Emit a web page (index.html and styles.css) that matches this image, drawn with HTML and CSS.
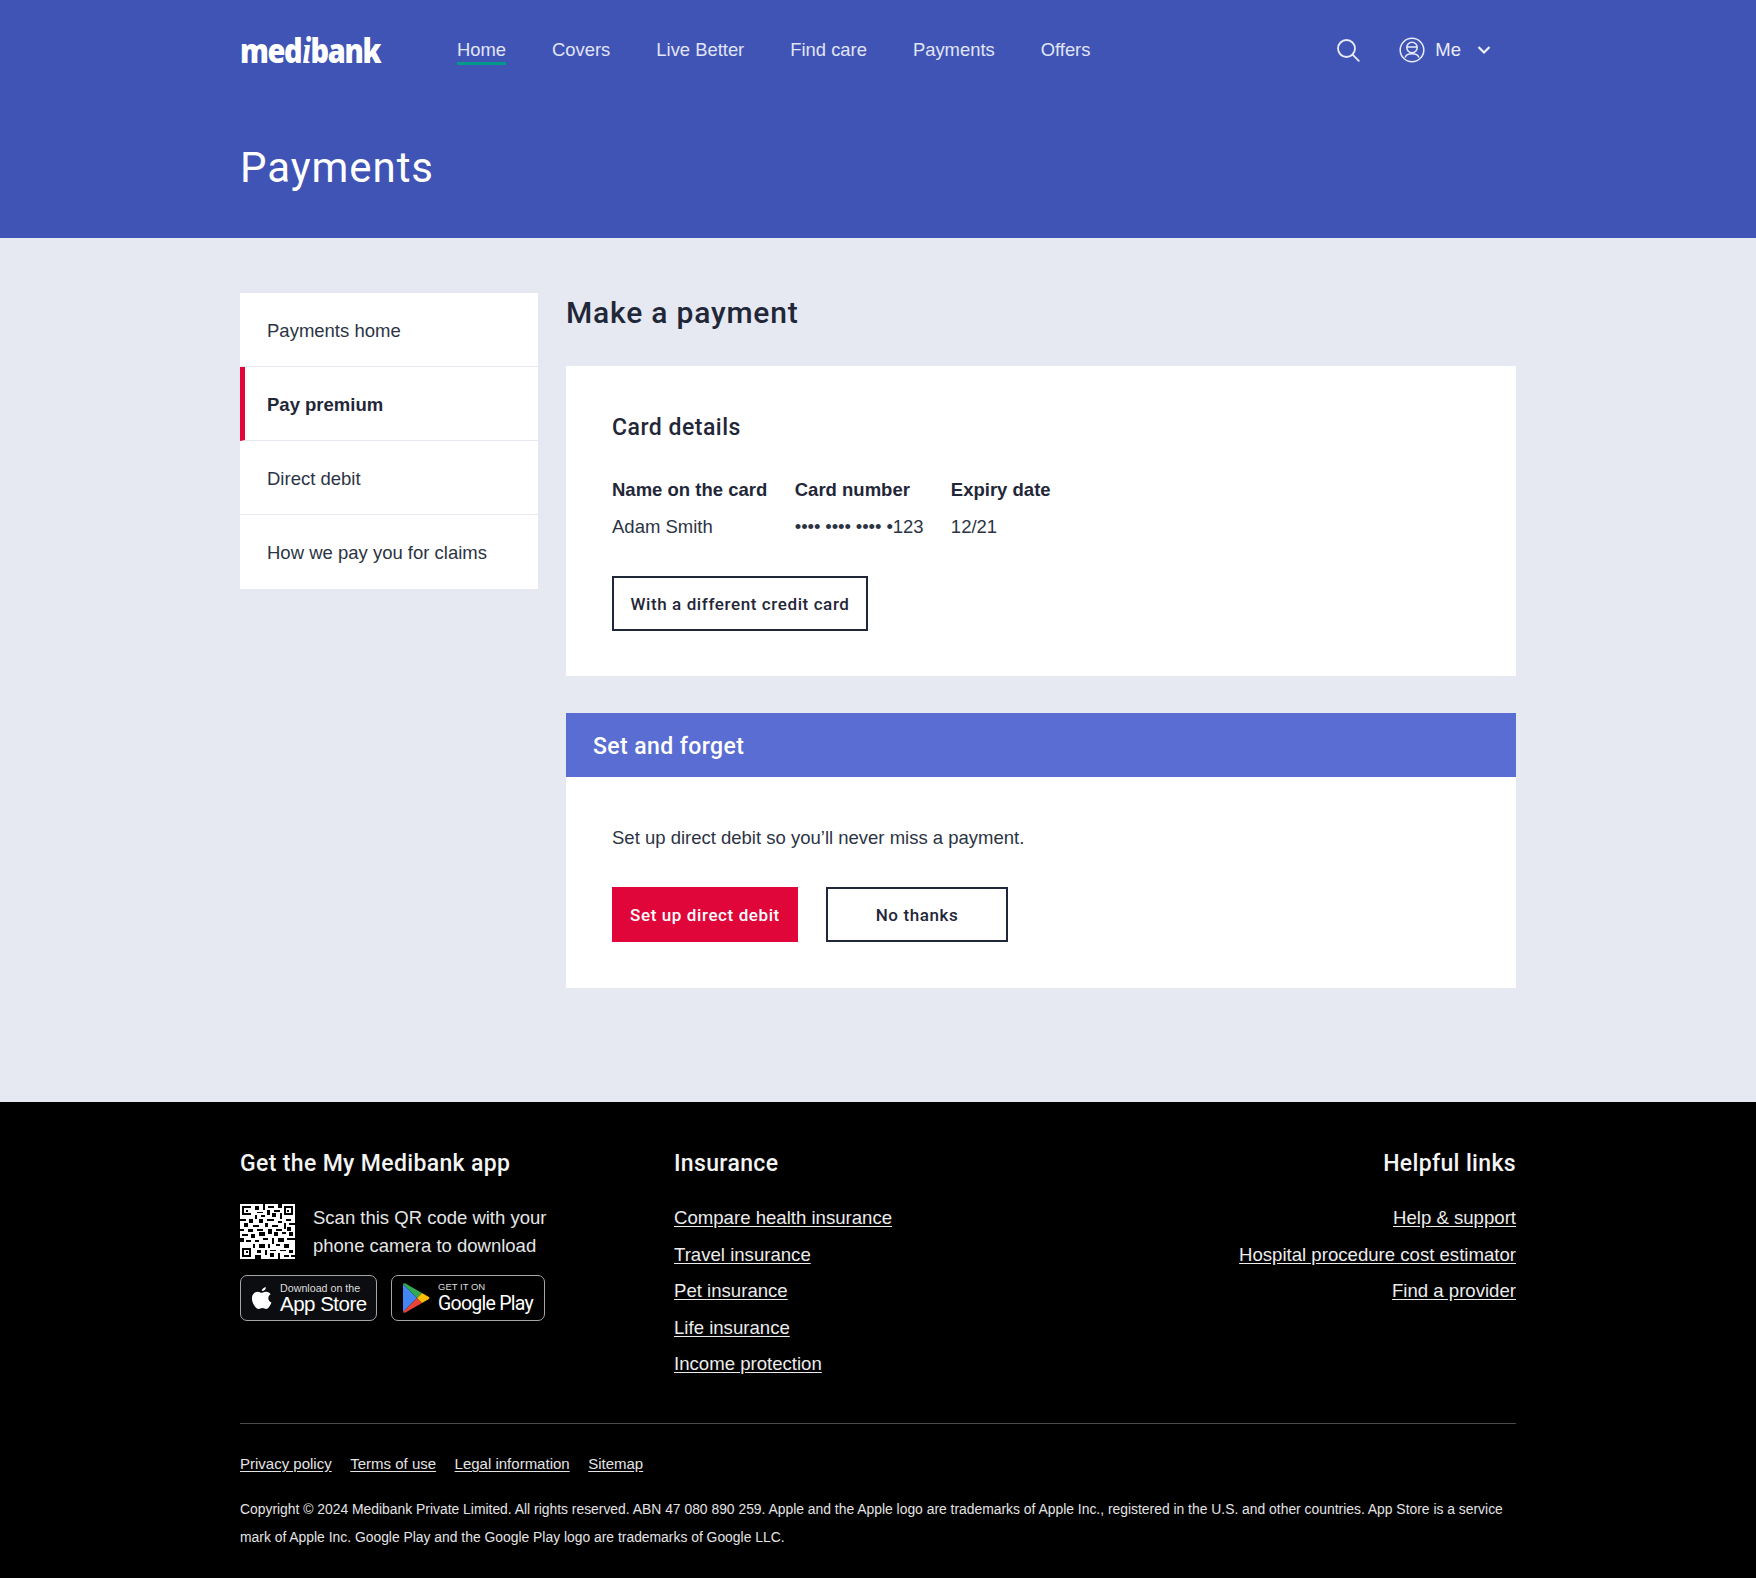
FILE: index.html
```html
<!DOCTYPE html>
<html lang="en">
<head>
<meta charset="utf-8">
<title>Payments</title>
<link rel="stylesheet" href="styles.css">
</head>
<body>
<header class="hero">
  <div class="wrap">
    <div class="topbar">
      <div class="logo">med<span class="logo-i">i</span>bank</div>
      <nav class="nav">
        <a class="nav-link nav-active">Home</a>
        <a class="nav-link">Covers</a>
        <a class="nav-link">Live Better</a>
        <a class="nav-link">Find care</a>
        <a class="nav-link">Payments</a>
        <a class="nav-link">Offers</a>
      </nav>
      <div class="tools">
        <svg class="ic-search" viewBox="0 0 26 26" width="26" height="26" fill="none" stroke="#e9ecf8" stroke-width="1.8"><circle cx="11.5" cy="11.5" r="8.5"/><path d="M17.8 17.8l6 6" stroke-linecap="round"/></svg>
        <div class="me">
          <svg viewBox="0 0 26 26" width="26" height="26" fill="none" stroke="#e9ecf8" stroke-width="1.5"><circle cx="13" cy="13" r="11.8"/><circle cx="13" cy="10.5" r="5.2"/><path d="M8 10h10"/><path d="M6 20.5c1-3 4-3.800 7-3.800s6 .8 7 3.800"/></svg>
          <span class="me-text">Me</span>
          <svg class="ic-chev" viewBox="0 0 14 10" width="14" height="10" fill="none" stroke="#eef0fa" stroke-width="2.2"><path d="M1.500 2l5.500 5.500L12.500 2"/></svg>
        </div>
      </div>
    </div>
    <h1 class="page-title">Payments</h1>
  </div>
</header>

<main class="content">
  <div class="wrap layout">
    <aside class="side">
      <a class="side-item">Payments home</a>
      <a class="side-item side-active">Pay premium</a>
      <a class="side-item">Direct debit</a>
      <a class="side-item">How we pay you for claims</a>
    </aside>
    <section class="main">
      <h2 class="main-title">Make a payment</h2>
      <div class="card">
        <h3 class="card-title">Card details</h3>
        <div class="details">
          <div class="detail"><div class="label">Name on the card</div><div class="value">Adam Smith</div></div>
          <div class="detail"><div class="label">Card number</div><div class="value value-num">•••• •••• •••• •123</div></div>
          <div class="detail"><div class="label">Expiry date</div><div class="value">12/21</div></div>
        </div>
        <button class="btn btn-wide">With a different credit card</button>
      </div>
      <div class="promo">
        <div class="promo-head">Set and forget</div>
        <div class="promo-body">
          <p class="promo-text">Set up direct debit so you’ll never miss a payment.</p>
          <div class="btn-row">
            <button class="btn btn-red">Set up direct debit</button>
            <button class="btn btn-no">No thanks</button>
          </div>
        </div>
      </div>
    </section>
  </div>
</main>

<footer class="footer">
  <div class="wrap">
    <div class="foot-cols">
      <div class="foot-app">
        <h4 class="foot-title">Get the My Medibank app</h4>
        <div class="qr-row">
          <svg class="qr" viewBox="0 0 29 29" width="55" height="55" shape-rendering="crispEdges">
            <rect width="29" height="29" fill="#fff"/>
            <g fill="#000">
              <path d="M1 1h5v1H2v3h4v1H1zM3 3h1v1H3zM23 1h5v5h-5zM24 2v3h3V2zM25 3h1v1h-1zM1 23h5v5H1zM2 24v3h3v-3zM3 25h1v1H3z" fill-rule="evenodd"/>
              <path d="M8 1h2v2H8zM12 0h1v3h-1zM15 1h3v1h-3zM20 0h2v2h-2zM9 4h3v1H9zM14 3h2v3h-2zM18 3h3v1h-3zM8 6h1v2H8zM11 6h2v1h-2zM17 5h2v2h-2zM21 5h1v3h-1zM0 8h3v1H0zM5 8h2v2H5zM10 8h2v2h-2zM14 8h4v1h-4zM20 9h2v1h-2zM24 8h3v1h-3zM2 10h2v2H2zM7 11h3v1H7zM13 10h2v2h-2zM17 11h3v1h-3zM23 10h1v3h-1zM26 10h3v1h-3zM0 13h2v1H0zM4 13h3v2H4zM9 13h3v1H9zM15 13h2v3h-2zM19 13h3v1h-3zM25 12h2v2h-2zM1 16h3v1H1zM6 16h2v2H6zM10 15h3v2h-3zM18 15h2v2h-2zM22 15h2v1h-2zM26 15h2v2h-2zM0 18h2v2H0zM3 19h3v1H3zM8 19h2v1H8zM12 18h3v1h-3zM17 18h1v3h-1zM20 18h3v2h-3zM25 18h4v1h-4zM7 21h1v2H7zM10 21h3v2h-3zM15 21h1v2h-1zM19 21h2v1h-2zM23 21h3v2h-3zM9 24h2v2H9zM13 24h1v3h-1zM16 24h3v1h-3zM21 24h3v1h-3zM26 24h2v2h-2zM8 27h3v2H8zM16 26h2v2h-2zM20 26h1v3h-1zM23 27h3v1h-3zM27 27h2v1h-2z"/>
            </g>
          </svg>
          <p class="qr-text">Scan this QR code with your<br>phone camera to download</p>
        </div>
        <div class="badges">
          <div class="badge badge-apple">
            <svg viewBox="0 0 24 28" width="21" height="25" fill="#fff"><path d="M17 1c.2 2-1.700 4.600-4.600 4.500C12 3.300 14.300 1.200 17 1zM12.300 7.500c1 0 2.600-1.400 5-1.300 1.500.1 3.800.7 5.100 2.800-3.800 2.500-3.400 8 .9 9.700-.9 2.500-3.300 7.300-5.900 7.300-1.700 0-2.300-1.100-4.300-1.100s-2.700 1.100-4.300 1.100C5.600 26 1 19.500 1 14c0-5 3.200-7.700 6.300-7.800 2.200 0 3.700 1.300 5 1.300z"/></svg>
            <div class="badge-text"><span class="badge-small">Download on the</span><span class="badge-big">App Store</span></div>
          </div>
          <div class="badge badge-google">
            <svg viewBox="0 0 28 32" width="28" height="32"><path d="M1 2v28l14-14z" fill="#4285f4"/><path d="M1 2l14 14 5-5L3.500 1.500C2.500 1 1.500 1.200 1 2z" fill="#34a853"/><path d="M1 30c.5.8 1.500 1 2.500.5L20 21l-5-5z" fill="#ea4335"/><path d="M20 11l6.500 3.700c1.200.7 1.200 1.900 0 2.600L20 21l-5-5z" fill="#fbbc04"/></svg>
            <div class="badge-text"><span class="badge-small badge-caps">GET IT ON</span><span class="badge-big badge-gp">Google Play</span></div>
          </div>
        </div>
      </div>
      <div class="foot-ins">
        <h4 class="foot-title">Insurance</h4>
        <a class="foot-link">Compare health insurance</a>
        <a class="foot-link">Travel insurance</a>
        <a class="foot-link">Pet insurance</a>
        <a class="foot-link">Life insurance</a>
        <a class="foot-link">Income protection</a>
      </div>
      <div class="foot-help">
        <h4 class="foot-title">Helpful links</h4>
        <a class="foot-link">Help &amp; support</a>
        <a class="foot-link">Hospital procedure cost estimator</a>
        <a class="foot-link">Find a provider</a>
      </div>
    </div>
    <div class="legal-links">
      <a class="legal-link">Privacy policy</a>
      <a class="legal-link">Terms of use</a>
      <a class="legal-link">Legal information</a>
      <a class="legal-link">Sitemap</a>
    </div>
    <p class="copyright">Copyright © 2024 Medibank Private Limited. All rights reserved. ABN 47 080 890 259. Apple and the Apple logo are trademarks of Apple Inc., registered in the U.S. and other countries. App Store is a service mark of Apple Inc. Google Play and the Google Play logo are trademarks of Google LLC.</p>
  </div>
</footer>
</body>
</html>
```
FILE: styles.css
```css
* { box-sizing: border-box; }
html, body { margin: 0; padding: 0; }
body { font-family: "Liberation Sans", Arial, sans-serif; color: #1f2738; background: #e6e9f1; font-size: 18.5px; }
.wrap { width: 1276px; margin-left: 240px; }
h1, h2, h3, h4, p { margin: 0; font-weight: 400; }

.hero { background: #4054b6; height: 238px; color: #fff; }
.topbar { display: flex; align-items: flex-start; height: 100px; padding-top: 32px; }
.logo { width: 217px; font-family: "Open Sans", sans-serif; font-weight: 800; font-size: 34px; line-height: 36px; letter-spacing: -1.600px; color: #fff; transform: scaleX(.85); transform-origin: left center; white-space: nowrap; }
.logo-i { font-family: "Liberation Serif", serif; font-style: italic; font-weight: 700; font-size: 38px; padding: 0 1px; }
.nav { display: flex; gap: 46px; }
.nav-link { font-size: 18.400px; line-height: 36px; height: 33px; color: #e1e5f6; }
.nav-active { border-bottom: 3px solid #00998a; }
.tools { margin-left: auto; display: flex; align-items: center; padding-top: 5px; padding-right: 25px; }
.ic-search { margin-right: 38px; }
.me { display: flex; align-items: center; }
.me-text { margin-left: 10px; font-size: 18.500px; color: #e9ecf8; }
.ic-chev { margin-left: 16px; }
.page-title { font-family: Roboto, sans-serif; font-size: 42px; line-height: 50px; letter-spacing: .95px; color: #fff; padding-top: 43px; }

.content { height: 864px; padding-top: 55px; }
.layout { display: flex; gap: 28px; align-items: flex-start; }
.side { width: 298px; display: flex; flex-direction: column; background: #fff; }
.side-item { display: flex; align-items: center; height: 74px; padding-left: 27px; padding-top: 2px; font-size: 18.500px; color: #2c3444; border-bottom: 1px solid #e6e9f1; }
.side-item:last-child { border-bottom: 0; }
.side-active { font-weight: 700; color: #1f2738; border-left: 5px solid #e0063a; padding-left: 22px; }
.main { flex: 1; }
.main-title { font-family: Roboto, sans-serif; font-weight: 500; font-size: 30px; line-height: 40px; letter-spacing: .8px; color: #1f2738; margin-bottom: 33px; }
.card { background: #fff; height: 310px; padding: 47px 46px 0; margin-bottom: 37px; }
.card-title { font-family: Roboto, sans-serif; font-weight: 500; font-size: 23px; line-height: 30px; letter-spacing: .5px; color: #1f2738; margin-bottom: 34px; }
.details { display: flex; gap: 27.500px; margin-bottom: 36px; }
.label { font-weight: 700; font-size: 18.500px; line-height: 26px; color: #1f2738; margin-bottom: 11px; }
.value { font-size: 18.500px; line-height: 26px; color: #2c3444; }
.value-num { letter-spacing: -.1px; }
.btn { display: block; height: 55px; font-family: Roboto, sans-serif; font-weight: 500; font-size: 17px; letter-spacing: .6px; color: #1f2738; background: #fff; border: 2px solid #1f2738; padding: 0; }
.btn-wide { width: 256px; }
.promo { background: #fff; height: 275px; }
.promo-head { background: #5a6dd3; height: 64px; line-height: 64px; padding-top: 2px; padding-left: 27px; font-family: Roboto, sans-serif; font-weight: 500; font-size: 23px; letter-spacing: .4px; color: #fff; }
.promo-body { padding: 46px 46px 0; }
.promo-text { font-size: 18.500px; line-height: 28px; color: #2c3444; margin-bottom: 35px; margin-top: 1px; }
.btn-row { display: flex; gap: 28px; }
.btn-red { width: 186px; background: #e0063a; border-color: #e0063a; color: #fff; }
.btn-no { width: 182px; }

.footer { background: #000; color: #fff; height: 476px; padding-top: 45px; }
.foot-cols { display: flex; height: 277px; border-bottom: 1px solid #4a4a4a; }
.foot-app { width: 434px; }
.foot-title { font-family: Roboto, sans-serif; font-weight: 500; font-size: 23px; line-height: 34px; letter-spacing: .35px; color: #f4f4f4; margin-bottom: 24px; }
.foot-link { display: block; font-size: 18.600px; line-height: 26px; margin-bottom: 10.600px; text-decoration: underline; text-underline-offset: 2px; color: #ececec; }
.foot-help { margin-left: auto; text-align: right; }
.qr-row { display: flex; gap: 18px; margin-top: -1px; }
.qr { display: block; }
.qr-text { font-size: 18.500px; line-height: 27.500px; color: #e6e6e6; }
.badges { display: flex; gap: 14px; margin-top: 16px; }
.badge { display: flex; align-items: center; height: 46px; background: #0c0d10; border: 1px solid #a6a6a6; border-radius: 7px; }
.badge-apple { width: 137px; padding-left: 10px; }
.badge-google { width: 154px; padding-left: 10px; background: #000; }
.badge-text { display: flex; flex-direction: column; margin-left: 8px; }
.badge-small { font-size: 10.700px; line-height: 12px; color: #dcdcdc; }
.badge-big { font-size: 20.500px; line-height: 20px; letter-spacing: -.5px; color: #fff; white-space: nowrap; }
.badge-gp { font-family: Roboto, sans-serif; font-size: 19.500px; line-height: 24px; letter-spacing: -.75px; }
.badge-caps { font-size: 9.500px; line-height: 11px; }
.legal-links { display: flex; gap: 18.500px; padding-top: 28px; }
.legal-link { font-size: 15px; line-height: 24px; text-decoration: underline; text-underline-offset: 2px; color: #e4e4e4; }
.copyright { font-size: 13.880px; line-height: 28px; color: #e4e4e4; margin-top: 19px; }
```
